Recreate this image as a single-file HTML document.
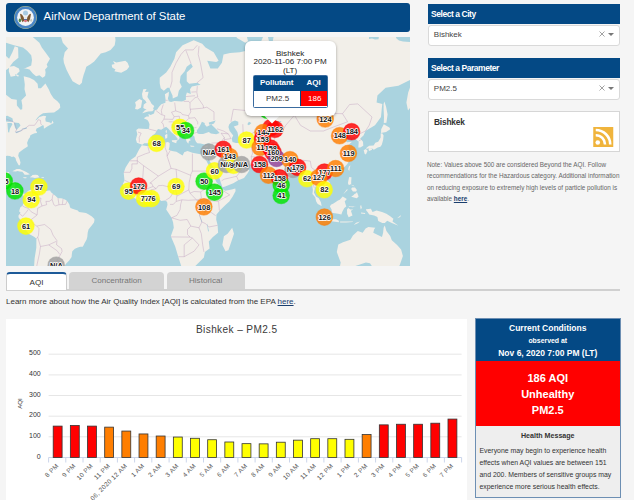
<!DOCTYPE html>
<html><head><meta charset="utf-8">
<style>
*{box-sizing:border-box}
html,body{margin:0;padding:0;width:634px;height:500px;overflow:hidden;background:#f5f5f5;font-family:"Liberation Sans",sans-serif;color:#333}
.abs{position:absolute}
#hdr{left:6px;top:3px;width:404px;height:29px;background:#044985;border-radius:3px}
#hdr .t{position:absolute;left:37.6px;top:7px;font-size:11.4px;color:#fff;white-space:nowrap}
#map{left:6px;top:37px;width:404px;height:229px;overflow:hidden;background:#aad3df}
#map svg{position:absolute;left:0;top:0}
.mk text{font:bold 7.4px "Liberation Sans",sans-serif;fill:#111;text-anchor:middle;paint-order:stroke;stroke:#fff;stroke-width:1.6px;stroke-linejoin:round}
.pop{left:244.5px;top:41px;width:91.2px;height:75.2px;background:#fff;border-radius:6px;box-shadow:0 1px 3px rgba(0,0,0,.35)}
.tip{left:265.5px;top:108.6px;width:12px;height:12px;background:#fff;transform:rotate(45deg)}
.pop .c{position:absolute;left:0;width:100%;text-align:center;font-size:8.1px;color:#222;line-height:8px}
.ptab{left:253px;top:74.6px;width:74.6px;height:33px;border:1px solid #3a6b9f;border-bottom-width:1.6px;border-radius:1.5px;background:#fff}
.sidehd{left:428px;width:192px;height:20px;background:#044985;color:#fff;font-weight:bold;font-size:8.5px;letter-spacing:-0.45px;padding:5px 0 0 3px}
.sel{left:428px;width:192px;height:20.5px;background:#fff;border:1px solid #d9d9d9;border-radius:3px;font-size:8px;color:#444;padding:4.4px 0 0 4.8px}
.sel .x{position:absolute;left:169.8px;top:5.4px;width:6px;height:6px}
.sel .ar{position:absolute;left:179px;top:7.4px;width:0;height:0;border-left:3.5px solid transparent;border-right:3.5px solid transparent;border-top:3.5px solid #777}
#rss{left:427.5px;top:111px;width:192.5px;height:41px;background:#fff;border:1px solid #d6d6d6}
#note{left:427px;top:159px;width:195px;font-size:6.35px;line-height:11.3px;color:#666}
.tab{top:272px;height:16.8px;border-radius:4px 4px 0 0;font-size:8.1px;text-align:center;padding-top:3.8px}
#tabline{left:6px;top:289px;width:614px;height:2px;background:#d0d0d0}
#learn{left:6px;top:297px;font-size:8px;color:#333;white-space:nowrap}
#chart{left:6px;top:318.5px;width:461px;height:190px;background:#fff}
#chart svg{position:absolute;left:-6px;top:-318.5px}
.yl text{font:7px "Liberation Sans",sans-serif;fill:#333;letter-spacing:-0.1px}
.xl text{font:6.4px "Liberation Sans",sans-serif;fill:#555;letter-spacing:0.3px}
#cc{left:475px;top:318.3px;width:145.5px;height:180px;border:1px solid #6d8fb3;background:#eeeeee}
#cc .top{position:absolute;left:0;top:0;width:100%;height:42px;background:#044985;color:#fff;text-align:center;font-weight:bold}
#cc .red{position:absolute;left:0;top:42px;width:100%;height:65.1px;background:#ff0000;color:#fff;text-align:center;font-weight:bold;font-size:11px;line-height:15.8px;padding-top:9.8px}
#cc .hm{position:absolute;left:0;top:113px;width:100%;text-align:center;font-weight:bold;font-size:7.1px;color:#333}
#cc .body{position:absolute;left:3.5px;top:126px;width:140px;font-size:6.9px;line-height:11.9px;color:#333}
</style></head><body>
<div id="hdr" class="abs">
 <svg class="abs" style="left:7.3px;top:1.8px" width="25" height="25" viewBox="0 0 25 25">
  <circle cx="12.5" cy="12.5" r="11.4" fill="#b9bd86"/>
  <circle cx="12.5" cy="12.5" r="10.9" fill="#4a86c6"/>
  <circle cx="12.5" cy="12.5" r="8.4" fill="#f2f4f6"/>
  <circle cx="12.5" cy="7.9" r="2.5" fill="#a8cbe3"/>
  <path d="M7 8.8 Q8.8 8.6 10.6 12 L11.4 15.6 L9.6 17.2 Q7.4 14.2 7 8.8Z" fill="#7d5a34"/>
  <path d="M18 8.8 Q16.2 8.6 14.4 12 L13.6 15.6 L15.4 17.2 Q17.6 14.2 18 8.8Z" fill="#7d5a34"/>
  <circle cx="12.5" cy="12.7" r="1.2" fill="#e3e7ea"/>
  <path d="M11 14 h3 v2.3 q-1.5 1.7 -3 0Z" fill="#d8707b"/>
  <rect x="11" y="14" width="3" height="0.9" fill="#4d6fa6"/>
  <ellipse cx="6.9" cy="15.3" rx="1.2" ry="1.9" fill="#4f8a4c"/>
  <ellipse cx="18.2" cy="15.3" rx="1" ry="1.5" fill="#c9c9c0"/>
 </svg>
 <div class="t">AirNow Department of State</div>
</div>
<div id="map" class="abs">
 <svg width="404" height="229" viewBox="6 37 404 229">
  <path d="M-12.2 183.2L-12.2 17.8L-12.2 45.2L-4.0 45.2L4.2 54.4L9.1 58.7L12.4 52.2L14.8 46.2L18.1 47.6L18.4 57.8L13.2 61.9L8.3 68.6L2.5 72.4L-2.7 88.7L5.8 94.5L11.5 98.9L16.8 99.7L16.9 105.6L20.5 109.8L22.2 109.3L22.3 105.3L21.4 100.3L26.1 95.4L24.5 89.3L24.8 84.5L23.7 76.3L29.5 77.7L34.0 80.1L37.6 83.8L38.2 88.3L41.0 88.3L45.4 83.5L48.7 89.3L50.8 93.9L53.6 98.3L57.4 101.2L59.8 103.9L60.3 107.5L58.5 109.6L54.1 112.4L48.4 112.7L43.1 113.2L39.9 115.2L37.6 117.5L35.3 120.6L36.4 120.1L39.4 117.0L43.5 115.7L46.2 116.2L45.3 118.7L45.7 121.6L50.0 122.5L51.2 123.7L52.5 120.6L53.6 123.0L47.7 126.3L43.9 128.8L43.8 126.3L43.1 124.9L39.7 126.9L36.6 128.5L35.8 130.6L36.9 132.1L36.9 133.0L34.8 133.2L32.8 133.9L30.4 135.2L29.7 137.7L28.6 139.0L27.3 142.3L27.1 142.9L27.9 146.2L26.1 147.6L23.7 149.1L20.7 151.3L18.9 152.7L18.2 155.7L19.6 159.3L20.5 162.6L19.9 165.3L18.7 165.2L17.4 163.0L16.1 160.6L15.5 158.0L13.7 156.5L11.9 157.0L9.9 155.9L7.3 155.7L5.0 156.1L5.5 158.2L3.4 157.8L0.6 157.2L-2.4 157.0L-6.5 159.3L-7.8 161.1L-7.6 164.1L-8.6 169.3L-7.8 171.9L-5.8 176.0L-3.2 177.5L1.2 177.0L3.0 174.9L3.7 172.5L7.4 171.9L9.4 171.9L8.3 174.6L7.6 177.3L7.0 179.1L6.5 181.6L8.3 181.8L11.5 181.6L15.1 182.8L14.8 186.5L14.5 189.9L15.5 191.5L17.6 193.2L20.7 192.7L23.8 193.5L25.1 194.0L26.8 192.4L27.9 190.9L30.0 189.9L32.3 189.4L34.1 187.5L34.8 188.9L34.3 190.2L34.5 192.4L34.0 190.5L36.6 189.5L36.9 188.0L37.6 189.0L40.0 190.7L43.5 190.5L45.6 191.2L48.4 190.5L50.2 190.4L50.8 191.9L53.1 193.9L55.7 195.9L56.4 196.8L58.0 198.2L61.1 198.3L63.1 198.8L65.9 200.0L67.7 201.8L69.5 204.7L69.8 206.4L70.5 208.0L72.4 208.8L74.6 209.6L77.8 210.5L79.0 212.1L82.7 212.6L86.0 212.9L88.8 214.6L91.9 216.4L94.2 218.7L94.5 219.8L94.0 222.5L91.9 225.3L89.3 228.6L88.5 229.5L87.7 232.8L87.3 237.1L86.5 239.7L84.5 243.2L83.6 245.3L82.7 246.7L80.3 246.7L77.8 247.4L74.9 248.8L72.3 251.2L71.9 253.7L71.6 256.9L69.2 260.5L66.0 263.7L63.9 267.2L61.6 269.0L56.6 268.2L58.2 272.3L56.6 276.4L48.4 281.7L41.8 316.3L30.4 310.7L30.7 279.6L32.0 272.3L34.1 266.3L34.6 258.6L36.3 247.8L36.4 238.8L34.5 237.1L28.7 233.7L26.6 230.8L25.1 227.8L22.8 222.8L18.7 217.8L18.4 215.7L20.0 213.6L20.4 212.3L19.1 211.6L19.6 209.6L20.4 207.2L22.2 206.0L23.2 203.9L25.0 201.4L24.8 198.2L23.5 195.7L21.4 194.4L19.9 196.0L17.6 194.5L15.1 194.0L12.4 192.4L10.9 189.9L8.6 187.4L7.8 186.0L5.0 185.7L2.5 184.9L0.4 183.8L-3.2 181.5L-6.5 181.8L-9.7 180.6L-14.7 178.9ZM142.3 144.8L136.9 142.7L135.9 139.2L137.3 134.3L136.3 129.9L138.4 128.5L146.6 129.0L149.0 128.8L149.5 124.2L148.6 121.8L147.4 119.9L143.8 118.2L146.6 116.5L149.0 116.5L148.4 114.0L150.7 115.0L154.0 113.5L154.8 110.6L157.2 109.6L159.0 106.7L161.3 104.2L165.4 102.8L165.6 99.7L164.9 94.2L168.9 91.8L168.7 95.4L167.9 98.3L168.7 101.2L171.1 102.0L174.4 100.9L178.5 101.2L182.1 101.4L185.9 99.7L185.9 95.4L186.9 92.4L190.8 93.9L190.0 89.3L191.9 86.4L200.6 84.8L197.3 82.8L189.2 83.8L186.7 81.2L186.7 72.4L192.8 66.7L191.0 63.6L186.7 66.7L184.7 71.3L180.6 76.0L179.7 82.2L181.8 86.7L178.8 90.8L177.7 96.3L172.8 98.6L172.5 95.4L170.3 90.8L169.5 87.7L167.4 87.7L163.8 90.8L160.7 88.3L159.7 83.2L159.7 77.7L166.2 72.4L170.3 66.7L174.4 58.7L176.1 52.2L182.6 45.2L193.7 40.3L202.2 43.8L205.5 47.6L213.7 52.2L218.6 60.7L216.2 61.9L207.2 60.7L210.4 68.6L217.8 68.6L221.9 62.8L223.5 54.4L230.1 53.1L239.9 52.2L246.4 50.8L250.5 47.6L259.5 45.2L266.1 29.7L271.8 52.2L269.4 60.7L274.3 32.5L282.5 26.9L293.9 24.0L311.9 11.3L334.8 24.0L347.9 32.5L357.8 29.7L364.3 32.5L379.0 35.2L397.1 32.5L413.4 42.8L429.8 47.6L442.9 66.7L429.8 77.7L418.3 84.5L418.3 96.9L408.0 110.6L406.4 102.6L408.2 92.4L413.4 78.4L398.4 85.8L385.6 87.7L377.4 95.4L376.6 102.6L382.3 103.9L381.7 109.3L381.0 117.0L375.0 125.3L367.4 129.7L365.5 131.0L363.5 135.4L360.2 138.6L363.0 141.7L363.3 145.8L360.2 147.4L358.3 147.6L358.6 143.7L358.7 141.7L356.1 139.4L354.8 136.9L351.2 137.5L349.6 134.5L347.1 137.5L344.7 138.6L345.5 140.7L347.1 142.3L352.0 141.7L348.8 144.8L348.3 147.8L350.4 152.7L351.2 154.6L351.2 156.5L349.6 160.2L347.3 163.9L345.0 166.6L338.9 170.0L334.0 171.9L331.9 174.1L329.1 171.9L326.3 172.8L324.5 176.3L326.7 179.8L329.6 182.3L330.4 187.4L326.7 190.7L323.1 193.9L322.6 190.7L319.3 188.2L316.0 185.7L314.9 188.2L313.9 192.4L316.0 196.5L318.8 198.2L320.9 202.3L321.7 205.9L317.7 203.9L316.2 201.4L315.2 197.3L312.4 194.0L312.9 189.9L312.3 185.7L311.3 180.6L307.0 180.6L306.2 178.0L302.9 173.7L301.3 170.2L297.2 171.1L293.9 171.9L293.1 174.6L287.4 178.9L283.3 182.3L283.0 186.5L281.6 191.5L278.4 194.7L276.2 191.5L273.9 186.7L272.3 182.3L270.7 176.3L270.5 172.8L270.2 170.5L266.9 173.2L264.5 170.2L263.3 168.2L260.9 166.1L254.6 165.2L246.4 164.8L244.0 162.1L240.7 162.1L234.7 158.4L230.9 156.5L230.1 158.4L232.5 162.1L235.0 164.8L235.8 163.7L235.8 166.6L239.9 167.2L242.0 165.2L243.7 163.4L244.8 167.5L249.4 170.2L247.3 173.7L244.0 178.0L238.3 180.3L233.3 183.2L225.2 186.5L222.5 187.2L221.1 183.2L219.4 178.0L215.5 171.9L212.9 166.6L209.6 161.1L208.8 157.4L207.5 160.8L204.9 156.7L204.4 154.0L207.6 153.6L209.0 150.7L210.1 147.8L210.4 143.7L208.0 143.3L204.7 144.6L200.6 143.5L197.3 143.3L196.0 141.7L194.9 139.6L194.4 136.4L192.4 134.5L189.2 135.4L188.8 137.5L190.8 140.2L189.0 141.1L188.3 143.7L186.7 141.7L185.9 139.6L184.2 136.4L183.4 133.2L181.8 131.0L178.0 128.8L174.4 125.8L173.9 123.9L171.6 124.4L172.1 127.6L174.7 131.0L177.9 132.3L181.0 135.2L181.6 136.9L179.3 136.0L179.5 138.6L177.2 140.9L177.7 138.8L174.9 135.2L171.6 132.5L168.4 128.8L166.1 126.7L163.5 128.3L161.2 129.7L158.0 129.0L156.6 131.0L155.1 133.4L152.3 135.4L151.0 137.5L151.8 139.2L150.4 141.5L147.9 143.3L144.3 143.3ZM204.4 154.0L204.9 156.7L207.0 162.1L209.8 167.5L211.7 171.1L214.5 178.0L216.5 182.3L220.7 186.5L222.4 189.0L225.2 190.7L231.7 189.5L235.3 188.5L235.6 190.9L232.7 196.5L229.3 201.4L225.7 204.7L219.8 210.5L216.5 214.6L216.2 219.5L217.6 225.3L218.1 232.8L212.9 237.1L208.8 241.4L209.6 248.5L204.9 251.9L203.9 257.6L194.1 267.2L184.2 268.8L181.6 267.2L178.5 257.6L175.2 246.5L170.8 236.2L173.8 227.8L173.1 222.5L171.6 217.8L166.2 209.6L167.5 204.7L167.1 201.8L164.6 200.6L161.3 201.0L157.1 197.5L153.1 198.2L148.2 199.8L145.0 199.8L139.2 200.8L133.8 197.7L129.9 194.0L126.9 190.7L124.0 188.2L122.9 183.7L124.5 180.6L123.7 172.8L125.6 167.5L127.8 163.9L130.2 160.2L135.5 156.5L139.1 149.5L141.8 145.2L148.2 146.2L156.4 143.1L164.6 142.7L167.9 142.1L169.7 143.1L169.5 146.8L168.7 149.7L172.0 151.1L176.4 151.7L182.6 155.5L184.2 152.3L187.5 151.1L192.4 152.7L200.4 154.2ZM12.4 171.2L14.8 170.0L16.6 169.1L19.7 168.9L23.0 170.4L26.3 171.9L28.7 173.4L30.0 174.2L27.9 174.7L24.6 174.7L23.8 173.4L22.3 171.8L19.7 171.4L17.6 171.1L15.6 171.4L12.4 171.2ZM32.3 174.9L35.3 174.7L37.7 175.1L39.5 177.2L36.9 177.7L34.8 178.0L32.8 177.5L29.7 177.2L32.0 175.8ZM23.3 177.2L26.6 177.2L26.3 178.2L24.5 178.2L23.2 177.7ZM41.5 177.2L44.1 177.3L43.8 178.0L41.5 178.0ZM-4.0 17.8L23.8 17.8L27.1 31.4L33.6 37.8L39.4 42.8L41.8 47.6L45.9 53.1L50.0 58.7L46.7 64.4L47.6 66.7L45.1 69.4L45.6 72.4L45.1 76.0L42.6 77.7L39.4 75.3L36.1 76.3L32.8 73.5L29.5 69.4L24.6 68.2L23.3 69.0L31.2 65.5L32.0 59.9L31.2 55.2L27.1 50.8L23.0 47.6L14.0 45.2L5.8 42.8L-4.0 42.8ZM14.0 65.9L18.9 68.6L19.7 71.3L14.8 76.0L10.7 76.7L8.8 71.3L9.1 66.7ZM14.8 74.5L18.1 76.7L18.9 75.6L16.4 74.2ZM53.3 -85.7L33.6 -3.3L39.4 7.8L53.3 14.6L59.8 26.9L60.6 35.2L62.8 42.8L68.0 48.5L64.7 52.2L63.4 58.7L63.9 62.8L66.5 69.8L69.7 76.0L72.6 81.2L78.2 84.5L79.6 85.1L81.9 82.8L82.4 79.5L83.6 74.9L85.2 70.5L86.3 66.7L90.1 64.4L94.2 61.5L97.5 57.4L100.8 53.5L105.7 52.2L110.6 49.9L114.7 45.2L115.5 40.3L114.7 32.5L118.8 24.0L121.2 11.3L126.9 -20.5L102.4 -85.7ZM113.0 61.1L116.3 62.4L125.3 60.7L127.6 62.8L129.2 66.7L126.9 69.8L121.2 72.7L114.3 71.3L115.5 69.4L112.2 67.5L111.7 64.7L114.7 64.0ZM142.2 113.2L148.2 111.4L152.3 111.2L153.8 109.8L153.1 108.5L154.3 106.1L151.7 103.9L150.2 101.2L147.4 96.9L148.6 91.8L145.0 92.1L146.6 89.0L143.3 89.3L142.0 93.9L142.5 97.4L143.3 98.9L145.0 100.3L146.6 102.6L143.8 104.5L143.3 108.0L145.0 109.1L146.6 109.6L144.6 110.4ZM139.5 98.9L135.1 102.3L135.9 105.3L135.1 109.1L137.6 109.6L141.0 107.5L141.5 104.2L142.2 100.6ZM171.8 140.2L177.0 140.0L176.2 143.3L172.1 141.7ZM166.6 133.9L167.5 134.5L167.2 138.1L165.3 138.8L164.9 135.2ZM166.9 129.9L166.6 133.4L165.6 132.1L165.7 130.8ZM190.1 145.6L194.6 146.0L193.7 146.8L190.8 146.8ZM208.1 145.6L207.2 147.0L204.5 147.6L204.4 146.4ZM282.8 191.9L285.4 194.9L284.1 198.2L282.6 198.0L282.1 194.9ZM232.2 227.8L234.0 233.7L231.4 241.4L228.4 250.3L225.5 251.2L222.4 244.9L223.9 236.2L227.6 233.7ZM382.2 133.2L383.6 135.4L383.1 140.0L381.8 144.8L380.4 146.8L377.7 147.6L373.8 149.7L371.7 148.2L365.9 148.8L366.8 147.4L369.2 145.8L373.6 145.4L375.3 142.7L378.2 141.7L380.7 137.5L380.7 133.6ZM383.8 124.2L389.4 127.6L390.2 129.2L386.1 132.1L381.0 133.0L381.2 129.2ZM365.8 149.0L367.6 150.7L365.9 154.6L364.6 153.8L363.7 150.3ZM371.8 148.2L372.0 149.7L369.2 151.1L368.4 149.7L369.2 148.4ZM384.4 101.4L386.1 106.7L387.6 114.5L386.4 122.8L383.8 123.0L384.0 117.0L383.6 109.3L383.6 103.9ZM350.4 165.2L349.2 171.1L348.1 169.3L348.9 166.6ZM332.4 174.4L333.2 176.3L330.8 177.7L329.3 175.3ZM349.2 177.0L351.5 177.3L351.2 181.5L351.2 184.9L354.5 186.5L353.7 185.4L350.4 184.3L348.9 185.2L347.9 183.2L348.4 180.6ZM356.9 191.9L358.6 196.5L356.8 198.2L351.2 196.7L353.7 194.9L354.5 194.0L356.1 193.2ZM355.0 187.4L356.9 189.9L356.1 191.5L352.9 191.5L351.2 189.0L352.0 187.4ZM347.1 189.0L343.4 194.0L344.3 193.2L347.6 189.9ZM342.7 196.5L346.8 199.0L344.7 201.4L346.3 206.4L344.3 208.0L342.2 212.1L341.4 214.6L338.1 213.7L333.2 212.9L331.9 212.6L331.6 209.6L329.9 206.4L330.9 204.7L333.5 203.4L338.0 200.6L339.8 199.8ZM325.0 217.7L329.1 218.2L332.2 219.3L336.0 219.3L338.9 220.8L338.9 222.3L333.2 221.6L329.1 220.8L323.7 219.2ZM340.1 221.5L346.3 221.6L352.9 221.5L352.9 222.1L346.3 222.6L340.1 222.5ZM359.9 221.6L356.1 222.8L353.7 225.0L357.8 223.3ZM356.5 205.9L352.9 207.2L348.8 206.7L348.3 208.0L350.4 209.6L353.3 209.6L350.9 210.8L352.5 215.4L348.6 217.2L347.1 213.7L347.0 209.6L349.2 206.4L355.5 206.4ZM361.0 204.7L361.9 208.0L360.7 209.3L360.2 206.4ZM361.0 212.6L365.1 212.9L365.1 213.9L361.0 213.6ZM365.9 209.3L370.9 208.8L372.5 212.1L376.6 210.5L382.0 211.9L386.4 213.7L390.2 216.2L393.4 218.7L392.5 221.5L398.2 225.5L395.4 224.5L391.3 222.8L387.2 220.8L384.8 223.1L382.3 223.0L378.2 221.1L377.4 217.0L374.1 215.4L369.2 214.6L367.6 212.1L366.3 210.5ZM400.8 214.9L399.5 216.2L397.1 218.2L400.3 217.0ZM384.8 225.6L386.4 231.1L390.2 236.1L391.8 240.2L397.1 244.9L401.1 249.4L402.9 256.1L399.7 265.3L392.1 275.3L382.3 276.4L377.4 270.2L373.3 268.2L370.0 263.3L365.9 262.4L354.5 266.3L344.3 269.2L339.8 267.2L340.7 262.4L336.8 252.1L338.3 244.6L343.0 242.3L350.4 239.7L352.9 235.4L357.8 231.1L362.7 232.8L365.6 228.5L368.4 227.0L375.3 227.8L374.1 229.5L373.3 232.8L382.0 237.1L383.1 232.8L383.6 227.8ZM245.3 42.8L236.6 37.8L239.1 26.9L249.7 11.3L262.8 4.3L249.7 24.0L246.4 35.2L248.1 41.3ZM247.3 43.8L250.5 45.2L248.1 46.2Z" fill="#f2efe9"/>
  <path d="M199.1 133.9L197.3 133.2L196.8 130.6L198.3 128.5L200.0 125.8L201.9 121.8L204.7 123.0L204.7 124.6L206.8 126.7L209.6 125.3L211.3 124.6L214.5 127.6L217.0 129.9L219.6 133.0L216.2 134.3L210.9 133.6L208.8 132.1L203.1 133.9ZM209.1 124.6L208.8 122.5L215.7 120.4L214.0 123.5L211.4 124.6ZM235.0 120.6L231.7 121.8L229.3 124.2L228.4 126.9L229.7 131.0L233.2 135.4L231.7 138.6L232.5 141.9L235.8 143.1L239.7 142.9L239.6 139.6L238.3 136.4L237.9 134.3L237.4 132.1L233.8 126.5L238.3 124.9L238.3 121.8ZM248.9 121.8L251.4 123.0L248.9 125.3L247.3 124.2ZM330.8 97.7L329.1 103.9L322.2 109.3L323.7 108.5L326.7 104.8L329.9 99.7ZM280.8 121.1L281.6 121.8L273.5 123.2L273.0 122.3ZM204.7 207.5L207.2 208.0L207.2 211.3L204.7 212.9L203.4 210.5ZM199.3 213.4L202.2 222.0L201.6 222.3L199.0 213.7ZM207.2 223.6L209.1 231.7L208.0 231.1L207.0 224.5ZM5.0 116.2L7.4 115.7L12.4 118.2L13.2 121.8L8.3 121.8L1.7 120.6ZM11.5 123.0L7.4 123.0L8.1 132.1L9.1 132.8L9.9 128.8L12.4 124.2ZM14.0 122.5L18.9 123.0L20.5 125.3L19.7 126.5L16.6 129.9L15.0 127.6L14.0 124.2ZM15.1 132.1L22.2 130.1L21.8 130.8L16.4 133.2ZM20.9 129.2L26.6 127.2L26.8 128.8L22.2 129.4ZM369 36L379 36L378.5 39.2L375 39.5L372 38.5L369 39Z M395.5 36L411 36L411 42L403 41.5L399 40.5L396.5 38.5Z" fill="#aad3df"/>
  <path d="M4.2 118.2L5.3 118.7L13.2 121.8L14.8 123.2L16.6 129.9L15.5 131.4L16.4 132.5L22.3 130.3L22.2 129.2L25.5 128.5L26.6 127.2L29.2 125.3L34.5 125.3L36.9 122.1L38.2 119.7L40.5 120.4L40.8 123.9L41.8 125.1M5.6 178.4L2.5 178.4L2.5 181.3L0.6 184.0M5.6 178.4L5.5 181.6M7.1 181.8L5.2 184.3L4.2 185.7M15.3 183.2L11.5 184.9L8.6 186.5M14.5 189.9L11.2 189.5M16.3 192.2L15.6 194.7M33.3 188.5L32.0 191.5L32.8 194.0L33.6 196.5L37.7 197.8L41.0 198.2L40.5 201.4L42.0 206.0M53.3 194.0L52.5 196.5L52.1 199.5L49.2 201.4L45.9 201.4L46.7 204.7L42.0 206.0M58.0 198.3L59.0 204.7M63.1 198.7L62.3 204.4M59.0 204.7L65.6 204.4L67.0 201.1M52.1 199.5L53.8 204.7L55.7 205.9L59.0 204.7M22.3 205.7L24.8 207.2L28.1 208.2L31.2 211.8L36.9 214.9M20.0 213.6L21.4 215.4L22.7 216.2L26.3 212.1L28.1 209.6M42.0 206.0L37.7 208.3L37.1 215.0L30.7 220.0L32.8 223.6L36.9 226.1L44.6 224.5L50.8 229.5L53.0 235.1L56.9 240.6L56.6 244.9L61.5 248.5L62.1 251.4L60.3 254.9L57.2 259.7L64.1 266.7M36.9 226.1L39.0 228.6L38.5 235.4L37.7 237.1L36.3 238.7M37.7 237.1L40.5 246.5L48.7 244.9L56.2 241.4M40.5 246.5L39.4 253.9L36.9 265.3L36.1 271.2M48.7 244.9L57.2 250.8L59.8 254.5M57.2 259.7L55.9 267.2M147.9 146.6L149.5 152.5L145.4 153.8L137.3 157.2L137.3 160.8L129.9 160.8M137.3 160.8L137.3 163.9L131.9 163.9L131.9 168.4L130.2 172.3L123.7 172.3M137.3 160.8L143.6 165.7L142.5 181.5L132.7 182.3L131.5 183.5L124.8 180.4M143.6 165.7L158.4 176.1L171.1 168.4L167.1 156.1L167.1 152.7L165.1 147.8L165.4 142.7M167.1 156.1L170.3 150.3M171.1 168.4L176.1 169.3L190.8 175.4L190.8 174.6L192.4 171.1L192.4 153.6M192.4 171.1L211.7 171.1M190.8 175.4L189.2 182.3L188.8 189.9L190.0 193.2L194.1 191.5L200.6 191.9L206.3 188.2L207.5 192.4L208.8 199.8L207.2 200.5M176.1 169.3L177.2 182.3L173.8 185.7L167.1 186.5L162.6 185.4L158.4 185.7L156.1 188.7L153.1 186.5L151.5 183.2L149.9 183.2L158.4 176.1M173.8 185.7L175.2 187.4L173.1 192.4L170.3 197.3L165.4 200.5M188.8 189.9L177.7 195.7L176.9 195.7L176.1 201.4L173.3 204.4L170.0 204.4M176.9 195.7L176.1 191.5L174.4 186.5M190.0 193.2L196.4 199.8L201.9 201.4L207.2 200.5M181.9 199.8L176.1 201.4M196.4 199.8L188.3 200.3L181.9 199.8L180.6 204.7L180.1 209.6L176.9 215.4L171.6 217.8M201.9 201.4L200.1 208.0L199.5 215.4L201.9 222.0L199.0 227.8L190.8 226.1L187.2 219.5L180.1 220.3L171.6 217.8M212.1 184.0L211.3 187.4L206.3 194.0L210.1 200.6L217.8 201.4L229.7 194.9L221.9 189.9M212.1 184.0L221.9 187.4M218.6 201.4L219.4 210.6M207.2 209.6L215.7 215.7M207.2 200.5L207.2 209.6M200.1 209.6L207.2 209.6M217.6 225.3L208.8 227.0L205.5 223.6L201.9 222.0M199.0 227.8L201.3 233.7L202.7 244.9L203.9 251.9M170.8 236.9L190.0 237.1L192.4 238.0M190.8 226.1L187.5 229.5L187.5 234.5L190.0 237.1M192.4 238.0L184.2 244.9L184.2 256.7L178.5 256.7M192.4 238.0L199.0 244.9L194.1 251.2L184.2 256.7M200.6 191.9L201.4 198.2L196.5 200.5M142.5 191.5L144.1 189.9L153.1 186.5M132.8 187.4L137.9 189.9L142.5 191.5L146.6 196.5L146.8 199.8M142.5 191.5L146.9 192.4L151.2 189.9L156.1 188.7M151.2 189.9L153.5 198.0M132.8 187.4L129.4 187.5L124.2 187.7M134.3 194.0L137.6 195.9L139.2 199.8M132.8 187.4L133.8 191.5L134.3 194.0M148.6 129.0L156.7 131.0M138.1 132.1L141.2 133.2L139.2 137.5L139.4 142.3M155.8 110.4L161.0 114.5L164.9 115.7L163.9 119.2L161.5 122.5L163.0 123.5L163.9 127.4L163.8 128.1M163.3 104.5L161.3 110.6L162.0 114.5M165.6 100.3L167.7 100.3M174.7 102.6L175.7 110.9L171.5 112.2L174.1 116.7L172.8 119.4L167.1 119.2L163.9 119.2M168.7 121.8L172.0 121.8L173.9 122.1L173.9 123.9M179.5 118.2L177.9 120.9L178.5 121.8L182.6 124.2L182.3 122.8L184.7 122.5L189.0 118.2M174.1 116.7L179.3 116.2L179.5 118.2M183.6 101.4L188.8 101.4L190.0 103.1L190.0 107.5L190.8 111.9L188.5 115.7M175.7 110.9L181.0 112.7L182.4 114.5L188.5 115.7L189.0 118.2M185.9 96.6L195.0 95.7M191.4 92.1L196.2 91.8M197.3 86.1L196.8 92.4L197.8 96.9L195.0 97.7L190.0 102.6M197.8 97.7L203.1 105.3L203.6 108.0L206.8 107.2L214.0 111.9L214.0 120.1M190.1 109.3L201.4 108.3L203.6 108.0M199.0 46.2L198.2 54.4L200.4 62.8L203.1 77.7L197.0 82.8M185.9 50.4L191.0 63.6M185.1 49.9L181.0 54.4L176.1 62.8L172.0 72.4L172.0 81.2L170.3 87.7M185.1 49.9L193.2 49.9L197.3 45.2M189.0 118.2L195.0 117.7L197.7 122.1L197.7 124.4M188.7 127.6L192.4 128.3L196.5 127.4M188.7 127.6L188.2 131.4L188.8 133.6L194.1 133.2L197.3 132.3M185.2 134.3L184.2 136.4M173.9 123.9L177.7 124.2L182.6 125.3L183.4 127.6L182.6 131.0M211.4 143.1L220.7 142.7L224.3 137.5L221.1 133.2M224.8 142.5L224.3 137.5M220.7 142.7L218.6 149.9L215.8 152.3L227.6 158.2L230.1 158.2M210.4 158.0L215.8 152.3M209.8 150.7L218.6 149.9M224.8 142.5L226.5 146.8L228.4 151.7L230.9 156.5M221.6 180.8L224.3 179.2L236.6 176.3L238.4 180.4M236.0 167.2L241.7 170.0L236.6 176.3M239.7 142.1L244.8 142.7L251.7 145.6L252.5 153.8L251.2 156.7L252.3 165.3M251.2 156.7L260.4 157.4L264.5 153.6L266.1 149.0L268.1 143.7L273.5 142.7M251.7 145.6L260.4 142.1L266.1 141.7L274.1 142.7M263.1 168.0L267.7 166.6L266.9 160.2L271.8 155.5L273.6 151.7L278.9 145.8M278.9 145.8L281.6 151.7L284.1 156.5L295.6 162.1L302.1 160.2L310.3 161.1L311.4 167.5L317.2 171.9L324.2 169.7L328.3 171.9M230.9 121.8L233.3 109.3L246.4 110.6L266.1 101.2L282.5 110.6L294.4 115.2M242.8 124.2L243.2 134.3L251.4 133.9L259.5 128.8L264.5 134.3L267.7 131.0L282.8 130.3M294.4 115.2L285.7 125.3L282.8 130.3L274.3 135.4L274.1 142.7M262.0 137.5L266.9 135.4L271.8 137.5M294.4 115.2L311.9 112.4L326.7 113.2L342.5 113.7L349.6 104.5L357.8 103.9L372.0 117.0L369.2 125.3L365.5 131.0M294.4 115.2L300.5 125.3L310.3 131.0L323.4 131.0L334.8 126.5L347.6 121.8L342.5 113.7M365.5 131.0L358.6 134.3L354.8 136.9M358.6 141.1L361.5 139.4M295.6 163.9L302.1 163.0L302.4 166.6L302.6 172.8M297.2 171.1L296.4 165.7L295.6 163.9M315.2 171.1L316.0 174.6L311.9 178.9L312.7 183.2L314.4 188.2M316.0 174.6L320.1 178.0L324.2 184.0L320.1 185.7L319.3 188.2M324.2 169.7L323.4 178.0L327.5 184.0L322.6 190.7M217.0 128.8L223.5 131.0L228.4 133.9M221.1 133.2L228.4 133.9L230.9 138.6L224.8 139.6" fill="none" stroke="#b994b8" stroke-opacity="0.55" stroke-width="0.7" stroke-linejoin="round"/>
  <g class="mk"><circle cx="4.3" cy="181.0" r="8.3" fill="#00e400" fill-opacity="0.82" stroke="#00e400" stroke-opacity="0.5" stroke-width="1.1"/><circle cx="14.9" cy="190.9" r="8.3" fill="#00e400" fill-opacity="0.82" stroke="#00e400" stroke-opacity="0.5" stroke-width="1.1"/><circle cx="38.9" cy="186.9" r="8.3" fill="#ffff00" fill-opacity="0.82" stroke="#ffff00" stroke-opacity="0.5" stroke-width="1.1"/><circle cx="31.2" cy="199.7" r="8.3" fill="#ffff00" fill-opacity="0.82" stroke="#ffff00" stroke-opacity="0.5" stroke-width="1.1"/><circle cx="25.9" cy="226.1" r="8.3" fill="#ffff00" fill-opacity="0.82" stroke="#ffff00" stroke-opacity="0.5" stroke-width="1.1"/><circle cx="56.2" cy="265.2" r="8.3" fill="#a0a0a0" fill-opacity="0.82" stroke="#a0a0a0" stroke-opacity="0.5" stroke-width="1.1"/><circle cx="128.5" cy="191.1" r="8.3" fill="#ffff00" fill-opacity="0.82" stroke="#ffff00" stroke-opacity="0.5" stroke-width="1.1"/><circle cx="138.6" cy="186.0" r="8.3" fill="#ff0000" fill-opacity="0.82" stroke="#ff0000" stroke-opacity="0.5" stroke-width="1.1"/><circle cx="144.6" cy="198.6" r="8.3" fill="#ffff00" fill-opacity="0.82" stroke="#ffff00" stroke-opacity="0.5" stroke-width="1.1"/><circle cx="151.3" cy="198.6" r="8.3" fill="#ffff00" fill-opacity="0.82" stroke="#ffff00" stroke-opacity="0.5" stroke-width="1.1"/><circle cx="176" cy="186.5" r="8.3" fill="#ffff00" fill-opacity="0.82" stroke="#ffff00" stroke-opacity="0.5" stroke-width="1.1"/><circle cx="156.5" cy="143.3" r="8.3" fill="#ffff00" fill-opacity="0.82" stroke="#ffff00" stroke-opacity="0.5" stroke-width="1.1"/><circle cx="180" cy="127.3" r="8.3" fill="#ffff00" fill-opacity="0.82" stroke="#ffff00" stroke-opacity="0.5" stroke-width="1.1"/><circle cx="185.6" cy="130.5" r="8.3" fill="#00e400" fill-opacity="0.82" stroke="#00e400" stroke-opacity="0.5" stroke-width="1.1"/><circle cx="204.1" cy="181.2" r="8.3" fill="#00e400" fill-opacity="0.82" stroke="#00e400" stroke-opacity="0.5" stroke-width="1.1"/><circle cx="214.5" cy="192.2" r="8.3" fill="#00e400" fill-opacity="0.82" stroke="#00e400" stroke-opacity="0.5" stroke-width="1.1"/><circle cx="203.9" cy="206.8" r="8.3" fill="#ff7e00" fill-opacity="0.82" stroke="#ff7e00" stroke-opacity="0.5" stroke-width="1.1"/><circle cx="214.5" cy="170.8" r="8.3" fill="#ffff00" fill-opacity="0.82" stroke="#ffff00" stroke-opacity="0.5" stroke-width="1.1"/><circle cx="209" cy="152.0" r="8.3" fill="#a0a0a0" fill-opacity="0.82" stroke="#a0a0a0" stroke-opacity="0.5" stroke-width="1.1"/><circle cx="223.2" cy="149.3" r="8.3" fill="#ff0000" fill-opacity="0.82" stroke="#ff0000" stroke-opacity="0.5" stroke-width="1.1"/><circle cx="229.6" cy="156.5" r="8.3" fill="#ff7e00" fill-opacity="0.82" stroke="#ff7e00" stroke-opacity="0.5" stroke-width="1.1"/><circle cx="226.4" cy="164.5" r="8.3" fill="#a0a0a0" fill-opacity="0.82" stroke="#a0a0a0" stroke-opacity="0.5" stroke-width="1.1"/><circle cx="233.6" cy="165.3" r="8.3" fill="#ffff00" fill-opacity="0.82" stroke="#ffff00" stroke-opacity="0.5" stroke-width="1.1"/><circle cx="241.6" cy="164.5" r="8.3" fill="#a0a0a0" fill-opacity="0.82" stroke="#a0a0a0" stroke-opacity="0.5" stroke-width="1.1"/><circle cx="246.5" cy="140.0" r="8.3" fill="#ffff00" fill-opacity="0.82" stroke="#ffff00" stroke-opacity="0.5" stroke-width="1.1"/><circle cx="267.5" cy="110.3" r="8.3" fill="#00e400" fill-opacity="0.82" stroke="#00e400" stroke-opacity="0.5" stroke-width="1.1"/><circle cx="271" cy="127.5" r="8.3" fill="#ff0000" fill-opacity="0.82" stroke="#ff0000" stroke-opacity="0.5" stroke-width="1.1"/><circle cx="263" cy="132.5" r="8.3" fill="#ff7e00" fill-opacity="0.82" stroke="#ff7e00" stroke-opacity="0.5" stroke-width="1.1"/><circle cx="275" cy="129.3" r="8.3" fill="#ff0000" fill-opacity="0.82" stroke="#ff0000" stroke-opacity="0.5" stroke-width="1.1"/><circle cx="262.5" cy="138.9" r="8.3" fill="#ff0000" fill-opacity="0.82" stroke="#ff0000" stroke-opacity="0.5" stroke-width="1.1"/><circle cx="260.2" cy="147.3" r="8.3" fill="#ff7e00" fill-opacity="0.82" stroke="#ff7e00" stroke-opacity="0.5" stroke-width="1.1"/><circle cx="270.6" cy="148.1" r="8.3" fill="#ff0000" fill-opacity="0.82" stroke="#ff0000" stroke-opacity="0.5" stroke-width="1.1"/><circle cx="273" cy="152.3" r="8.3" fill="#ff0000" fill-opacity="0.82" stroke="#ff0000" stroke-opacity="0.5" stroke-width="1.1"/><circle cx="276.6" cy="158.5" r="8.3" fill="#8f3f97" fill-opacity="0.82" stroke="#8f3f97" stroke-opacity="0.5" stroke-width="1.1"/><circle cx="293" cy="169.5" r="8.3" fill="#a0a0a0" fill-opacity="0.82" stroke="#a0a0a0" stroke-opacity="0.5" stroke-width="1.1"/><circle cx="290" cy="159.7" r="8.3" fill="#ff7e00" fill-opacity="0.82" stroke="#ff7e00" stroke-opacity="0.5" stroke-width="1.1"/><circle cx="297.6" cy="167.3" r="8.3" fill="#ff0000" fill-opacity="0.82" stroke="#ff0000" stroke-opacity="0.5" stroke-width="1.1"/><circle cx="259.5" cy="164.5" r="8.3" fill="#ff0000" fill-opacity="0.82" stroke="#ff0000" stroke-opacity="0.5" stroke-width="1.1"/><circle cx="268.5" cy="175.2" r="8.3" fill="#ff7e00" fill-opacity="0.82" stroke="#ff7e00" stroke-opacity="0.5" stroke-width="1.1"/><circle cx="279.6" cy="177.9" r="8.3" fill="#ff0000" fill-opacity="0.82" stroke="#ff0000" stroke-opacity="0.5" stroke-width="1.1"/><circle cx="281.2" cy="185.1" r="8.3" fill="#00e400" fill-opacity="0.82" stroke="#00e400" stroke-opacity="0.5" stroke-width="1.1"/><circle cx="281.2" cy="195.5" r="8.3" fill="#00e400" fill-opacity="0.82" stroke="#00e400" stroke-opacity="0.5" stroke-width="1.1"/><circle cx="306.8" cy="178.7" r="8.3" fill="#ffff00" fill-opacity="0.82" stroke="#ffff00" stroke-opacity="0.5" stroke-width="1.1"/><circle cx="324.4" cy="172.0" r="8.3" fill="#ff0000" fill-opacity="0.82" stroke="#ff0000" stroke-opacity="0.5" stroke-width="1.1"/><circle cx="318.7" cy="177.5" r="8.3" fill="#ff7e00" fill-opacity="0.82" stroke="#ff7e00" stroke-opacity="0.5" stroke-width="1.1"/><circle cx="335.6" cy="168.5" r="8.3" fill="#ff7e00" fill-opacity="0.82" stroke="#ff7e00" stroke-opacity="0.5" stroke-width="1.1"/><circle cx="324.2" cy="189.7" r="8.3" fill="#ffff00" fill-opacity="0.82" stroke="#ffff00" stroke-opacity="0.5" stroke-width="1.1"/><circle cx="324.4" cy="217.1" r="8.3" fill="#ff7e00" fill-opacity="0.82" stroke="#ff7e00" stroke-opacity="0.5" stroke-width="1.1"/><circle cx="325.2" cy="118.9" r="8.3" fill="#ff7e00" fill-opacity="0.82" stroke="#ff7e00" stroke-opacity="0.5" stroke-width="1.1"/><circle cx="339.6" cy="135.7" r="8.3" fill="#ff7e00" fill-opacity="0.82" stroke="#ff7e00" stroke-opacity="0.5" stroke-width="1.1"/><circle cx="351.6" cy="131.7" r="8.3" fill="#ff0000" fill-opacity="0.82" stroke="#ff0000" stroke-opacity="0.5" stroke-width="1.1"/><circle cx="348.4" cy="153.3" r="8.3" fill="#ff7e00" fill-opacity="0.82" stroke="#ff7e00" stroke-opacity="0.5" stroke-width="1.1"/><text x="4.5" y="183.7">15</text><text x="15.1" y="193.6">18</text><text x="39.1" y="189.6">57</text><text x="31.4" y="202.39999999999998">94</text><text x="26.099999999999998" y="228.79999999999998">61</text><text x="56.400000000000006" y="267.9">N/A</text><text x="128.7" y="193.79999999999998">95</text><text x="138.79999999999998" y="188.7">172</text><text x="144.79999999999998" y="201.29999999999998">77</text><text x="151.5" y="201.29999999999998">76</text><text x="176.2" y="189.2">69</text><text x="156.7" y="146.0">68</text><text x="180.2" y="130.0">55</text><text x="185.79999999999998" y="133.2">34</text><text x="204.29999999999998" y="183.89999999999998">50</text><text x="214.7" y="194.89999999999998">145</text><text x="204.1" y="209.5">108</text><text x="214.7" y="173.5">60</text><text x="209.2" y="154.7">N/A</text><text x="223.39999999999998" y="152.0">161</text><text x="229.79999999999998" y="159.2">143</text><text x="226.6" y="167.2">N/A</text><text x="233.79999999999998" y="168.0">99</text><text x="241.79999999999998" y="167.2">N/A</text><text x="246.7" y="142.7">87</text><text x="263.2" y="135.2">144</text><text x="275.2" y="132.0">1162</text><text x="262.7" y="141.6">153</text><text x="260.4" y="150.0">11</text><text x="270.8" y="150.79999999999998">158</text><text x="273.2" y="155.0">160</text><text x="276.8" y="161.2">209</text><text x="293.2" y="172.2">N/A</text><text x="290.2" y="162.39999999999998">140</text><text x="297.8" y="170.0">179</text><text x="259.7" y="167.2">158</text><text x="268.7" y="177.89999999999998">112</text><text x="279.8" y="180.6">158</text><text x="281.4" y="187.79999999999998">46</text><text x="281.4" y="198.2">41</text><text x="307.0" y="181.39999999999998">62</text><text x="324.59999999999997" y="174.7">177</text><text x="318.9" y="180.2">127</text><text x="335.8" y="171.2">111</text><text x="324.4" y="192.39999999999998">82</text><text x="324.59999999999997" y="219.79999999999998">126</text><text x="325.4" y="121.60000000000001">124</text><text x="339.8" y="138.39999999999998">148</text><text x="351.8" y="134.39999999999998">184</text><text x="348.59999999999997" y="156.0">119</text></g>
 </svg>
</div>
<div class="abs tip"></div>
<div class="abs pop">
 <div class="c" style="top:8.7px">Bishkek</div>
 <div class="c" style="top:17.4px">2020-11-06 7:00 PM</div>
 <div class="c" style="top:25.5px">(LT)</div>
</div>
<div class="abs ptab">
 <div class="abs" style="left:0;top:0;width:72.6px;height:15.5px;background:#044985"></div>
 <div class="abs" style="left:6px;top:2.2px;font-size:8px;font-weight:bold;color:#fff;letter-spacing:-0.1px">Pollutant</div>
 <div class="abs" style="left:52.5px;top:2.2px;font-size:8px;font-weight:bold;color:#fff">AQI</div>
 <div class="abs" style="left:46.3px;top:15.5px;width:26.3px;height:15px;background:#f00;border-left:1px solid #044985"></div>
 <div class="abs" style="left:12px;top:18.2px;font-size:8px;color:#333">PM2.5</div>
 <div class="abs" style="left:54px;top:18.2px;font-size:8px;color:#fff">186</div>
</div>

<div class="abs sidehd" style="top:3.5px">Select a City</div>
<div class="abs sel" style="top:25px">Bishkek<svg class="x" viewBox="0 0 6 6"><path d="M0.5 0.5L5.5 5.5M5.5 0.5L0.5 5.5" stroke="#999" stroke-width="0.9"/></svg><span class="ar"></span></div>
<div class="abs sidehd" style="top:58px">Select a Parameter</div>
<div class="abs sel" style="top:79px">PM2.5<svg class="x" viewBox="0 0 6 6"><path d="M0.5 0.5L5.5 5.5M5.5 0.5L0.5 5.5" stroke="#999" stroke-width="0.9"/></svg><span class="ar"></span></div>
<div id="rss" class="abs">
 <div class="abs" style="left:5.5px;top:5.2px;font-size:8.4px;font-weight:bold;color:#333;letter-spacing:-0.2px">Bishkek</div>
 <svg class="abs" style="left:164.5px;top:14.5px" width="20.5" height="20" viewBox="0 0 20 20">
  <rect width="20" height="20" fill="#f0b43c"/>
  <circle cx="4.5" cy="15.5" r="2.3" fill="#fff"/>
  <path d="M2.5 8.2 A9.3 9.3 0 0 1 11.8 17.5" stroke="#fff" stroke-width="2.6" fill="none"/>
  <path d="M2.5 3 A14.5 14.5 0 0 1 17 17.5" stroke="#fff" stroke-width="2.6" fill="none"/>
 </svg>
</div>
<div id="note" class="abs">Note: Values above 500 are considered Beyond the AQI. Follow recommendations for the Hazardous category. Additional information on reducing exposure to extremely high levels of particle pollution is available <b style="color:#1a3e6e;text-decoration:underline">here</b>.</div>

<div id="tabline" class="abs"></div>
<div class="abs tab" style="left:6.3px;width:60.6px;background:#fff;border:1px solid #ccc;border-top:2px solid #1d5a98;border-bottom:none;color:#333;height:17.5px">AQI</div>
<div class="abs tab" style="left:68.7px;width:95.8px;background:#d3d3d3;color:#777">Concentration</div>
<div class="abs tab" style="left:166.6px;width:78px;background:#d3d3d3;color:#777">Historical</div>
<div id="learn" class="abs">Learn more about how the Air Quality Index [AQI] is calculated from the EPA <span style="color:#1a3e6e;text-decoration:underline">here</span>.</div>

<div id="chart" class="abs">
 <svg width="634" height="500" viewBox="0 0 634 500">
  <text x="236.7" y="332.5" text-anchor="middle" style="font:10.1px 'Liberation Sans',sans-serif;fill:#3a3a3a;letter-spacing:0.38px">Bishkek – PM2.5</text>
  <text transform="translate(21.8,403.5) rotate(-90)" text-anchor="middle" style="font:6.1px 'Liberation Sans',sans-serif;fill:#333">AQI</text>
  <line x1="48.6" y1="436.8" x2="461.6" y2="436.8" stroke="#e6e6e6" stroke-width="1"/><line x1="48.6" y1="416.2" x2="461.6" y2="416.2" stroke="#e6e6e6" stroke-width="1"/><line x1="48.6" y1="395.5" x2="461.6" y2="395.5" stroke="#e6e6e6" stroke-width="1"/><line x1="48.6" y1="374.9" x2="461.6" y2="374.9" stroke="#e6e6e6" stroke-width="1"/><line x1="48.6" y1="354.2" x2="461.6" y2="354.2" stroke="#e6e6e6" stroke-width="1"/><line x1="48.6" y1="457.5" x2="461.6" y2="457.5" stroke="#ccd6eb" stroke-width="1"/><line x1="48.6" y1="457.5" x2="48.6" y2="462.5" stroke="#ccd6eb" stroke-width="1"/><line x1="65.8" y1="457.5" x2="65.8" y2="462.5" stroke="#ccd6eb" stroke-width="1"/><line x1="83.0" y1="457.5" x2="83.0" y2="462.5" stroke="#ccd6eb" stroke-width="1"/><line x1="100.2" y1="457.5" x2="100.2" y2="462.5" stroke="#ccd6eb" stroke-width="1"/><line x1="117.4" y1="457.5" x2="117.4" y2="462.5" stroke="#ccd6eb" stroke-width="1"/><line x1="134.6" y1="457.5" x2="134.6" y2="462.5" stroke="#ccd6eb" stroke-width="1"/><line x1="151.8" y1="457.5" x2="151.8" y2="462.5" stroke="#ccd6eb" stroke-width="1"/><line x1="169.1" y1="457.5" x2="169.1" y2="462.5" stroke="#ccd6eb" stroke-width="1"/><line x1="186.3" y1="457.5" x2="186.3" y2="462.5" stroke="#ccd6eb" stroke-width="1"/><line x1="203.5" y1="457.5" x2="203.5" y2="462.5" stroke="#ccd6eb" stroke-width="1"/><line x1="220.7" y1="457.5" x2="220.7" y2="462.5" stroke="#ccd6eb" stroke-width="1"/><line x1="237.9" y1="457.5" x2="237.9" y2="462.5" stroke="#ccd6eb" stroke-width="1"/><line x1="255.1" y1="457.5" x2="255.1" y2="462.5" stroke="#ccd6eb" stroke-width="1"/><line x1="272.3" y1="457.5" x2="272.3" y2="462.5" stroke="#ccd6eb" stroke-width="1"/><line x1="289.5" y1="457.5" x2="289.5" y2="462.5" stroke="#ccd6eb" stroke-width="1"/><line x1="306.7" y1="457.5" x2="306.7" y2="462.5" stroke="#ccd6eb" stroke-width="1"/><line x1="323.9" y1="457.5" x2="323.9" y2="462.5" stroke="#ccd6eb" stroke-width="1"/><line x1="341.1" y1="457.5" x2="341.1" y2="462.5" stroke="#ccd6eb" stroke-width="1"/><line x1="358.4" y1="457.5" x2="358.4" y2="462.5" stroke="#ccd6eb" stroke-width="1"/><line x1="375.6" y1="457.5" x2="375.6" y2="462.5" stroke="#ccd6eb" stroke-width="1"/><line x1="392.8" y1="457.5" x2="392.8" y2="462.5" stroke="#ccd6eb" stroke-width="1"/><line x1="410.0" y1="457.5" x2="410.0" y2="462.5" stroke="#ccd6eb" stroke-width="1"/><line x1="427.2" y1="457.5" x2="427.2" y2="462.5" stroke="#ccd6eb" stroke-width="1"/><line x1="444.4" y1="457.5" x2="444.4" y2="462.5" stroke="#ccd6eb" stroke-width="1"/><line x1="461.6" y1="457.5" x2="461.6" y2="462.5" stroke="#ccd6eb" stroke-width="1"/><rect x="53.20" y="426.10" width="8.9" height="31.4" fill="#ff0000" stroke="#333" stroke-width="0.8"/><rect x="70.36" y="425.48" width="8.9" height="32.0" fill="#ff0000" stroke="#333" stroke-width="0.8"/><rect x="87.53" y="426.10" width="8.9" height="31.4" fill="#ff0000" stroke="#333" stroke-width="0.8"/><rect x="104.69" y="427.13" width="8.9" height="30.4" fill="#ff7e00" stroke="#333" stroke-width="0.8"/><rect x="121.86" y="431.06" width="8.9" height="26.4" fill="#ff7e00" stroke="#333" stroke-width="0.8"/><rect x="139.03" y="433.95" width="8.9" height="23.6" fill="#ff7e00" stroke="#333" stroke-width="0.8"/><rect x="156.19" y="436.01" width="8.9" height="21.5" fill="#ff7e00" stroke="#333" stroke-width="0.8"/><rect x="173.36" y="437.05" width="8.9" height="20.5" fill="#ffff00" stroke="#333" stroke-width="0.8"/><rect x="190.52" y="438.29" width="8.9" height="19.2" fill="#ffff00" stroke="#333" stroke-width="0.8"/><rect x="207.69" y="439.73" width="8.9" height="17.8" fill="#ffff00" stroke="#333" stroke-width="0.8"/><rect x="224.85" y="442.00" width="8.9" height="15.5" fill="#ffff00" stroke="#333" stroke-width="0.8"/><rect x="242.02" y="443.66" width="8.9" height="13.8" fill="#ffff00" stroke="#333" stroke-width="0.8"/><rect x="259.18" y="443.86" width="8.9" height="13.6" fill="#ffff00" stroke="#333" stroke-width="0.8"/><rect x="276.34" y="442.21" width="8.9" height="15.3" fill="#ffff00" stroke="#333" stroke-width="0.8"/><rect x="293.51" y="440.15" width="8.9" height="17.4" fill="#ffff00" stroke="#333" stroke-width="0.8"/><rect x="310.67" y="438.70" width="8.9" height="18.8" fill="#ffff00" stroke="#333" stroke-width="0.8"/><rect x="327.84" y="438.70" width="8.9" height="18.8" fill="#ffff00" stroke="#333" stroke-width="0.8"/><rect x="345.00" y="439.32" width="8.9" height="18.2" fill="#ffff00" stroke="#333" stroke-width="0.8"/><rect x="362.17" y="434.57" width="8.9" height="22.9" fill="#ff7e00" stroke="#333" stroke-width="0.8"/><rect x="379.33" y="424.86" width="8.9" height="32.6" fill="#ff0000" stroke="#333" stroke-width="0.8"/><rect x="396.50" y="424.24" width="8.9" height="33.3" fill="#ff0000" stroke="#333" stroke-width="0.8"/><rect x="413.66" y="424.24" width="8.9" height="33.3" fill="#ff0000" stroke="#333" stroke-width="0.8"/><rect x="430.83" y="423.20" width="8.9" height="34.3" fill="#ff0000" stroke="#333" stroke-width="0.8"/><rect x="447.99" y="419.07" width="8.9" height="38.4" fill="#ff0000" stroke="#333" stroke-width="0.8"/><g class="yl"><text x="40.5" y="458.7" text-anchor="end">0</text><text x="40.5" y="438.0" text-anchor="end">100</text><text x="40.5" y="417.4" text-anchor="end">200</text><text x="40.5" y="396.7" text-anchor="end">300</text><text x="40.5" y="376.1" text-anchor="end">400</text><text x="40.5" y="355.4" text-anchor="end">500</text></g><g class="xl"><text transform="translate(58.9,466.3) rotate(-45)" text-anchor="end">8 PM</text><text transform="translate(76.1,466.3) rotate(-45)" text-anchor="end">9 PM</text><text transform="translate(93.3,466.3) rotate(-45)" text-anchor="end">10 PM</text><text transform="translate(110.4,466.3) rotate(-45)" text-anchor="end">11 PM</text><text transform="translate(127.6,466.3) rotate(-45)" text-anchor="end">Nov 06, 2020 12 AM</text><text transform="translate(144.8,466.3) rotate(-45)" text-anchor="end">1 AM</text><text transform="translate(161.9,466.3) rotate(-45)" text-anchor="end">2 AM</text><text transform="translate(179.1,466.3) rotate(-45)" text-anchor="end">3 AM</text><text transform="translate(196.3,466.3) rotate(-45)" text-anchor="end">4 AM</text><text transform="translate(213.4,466.3) rotate(-45)" text-anchor="end">5 AM</text><text transform="translate(230.6,466.3) rotate(-45)" text-anchor="end">6 AM</text><text transform="translate(247.8,466.3) rotate(-45)" text-anchor="end">7 AM</text><text transform="translate(264.9,466.3) rotate(-45)" text-anchor="end">8 AM</text><text transform="translate(282.1,466.3) rotate(-45)" text-anchor="end">9 AM</text><text transform="translate(299.3,466.3) rotate(-45)" text-anchor="end">10 AM</text><text transform="translate(316.4,466.3) rotate(-45)" text-anchor="end">11 AM</text><text transform="translate(333.6,466.3) rotate(-45)" text-anchor="end">12 PM</text><text transform="translate(350.8,466.3) rotate(-45)" text-anchor="end">1 PM</text><text transform="translate(367.9,466.3) rotate(-45)" text-anchor="end">2 PM</text><text transform="translate(385.1,466.3) rotate(-45)" text-anchor="end">3 PM</text><text transform="translate(402.2,466.3) rotate(-45)" text-anchor="end">4 PM</text><text transform="translate(419.4,466.3) rotate(-45)" text-anchor="end">5 PM</text><text transform="translate(436.6,466.3) rotate(-45)" text-anchor="end">6 PM</text><text transform="translate(453.7,466.3) rotate(-45)" text-anchor="end">7 PM</text></g>
 </svg>
</div>

<div id="cc" class="abs">
 <div class="top">
  <div class="abs" style="left:0;top:3.6px;width:100%;font-size:8.5px">Current Conditions</div>
  <div class="abs" style="left:0;top:17.5px;width:100%;font-size:6.9px">observed at</div>
  <div class="abs" style="left:0;top:28.3px;width:100%;font-size:8.5px">Nov 6, 2020 7:00 PM (LT)</div>
 </div>
 <div class="red">186 AQI<br>Unhealthy<br>PM2.5</div>
 <div class="hm">Health Message</div>
 <div class="body">Everyone may begin to experience health effects when AQI values are between 151 and 200. Members of sensitive groups may experience more serious health effects.</div>
</div>
</body></html>
